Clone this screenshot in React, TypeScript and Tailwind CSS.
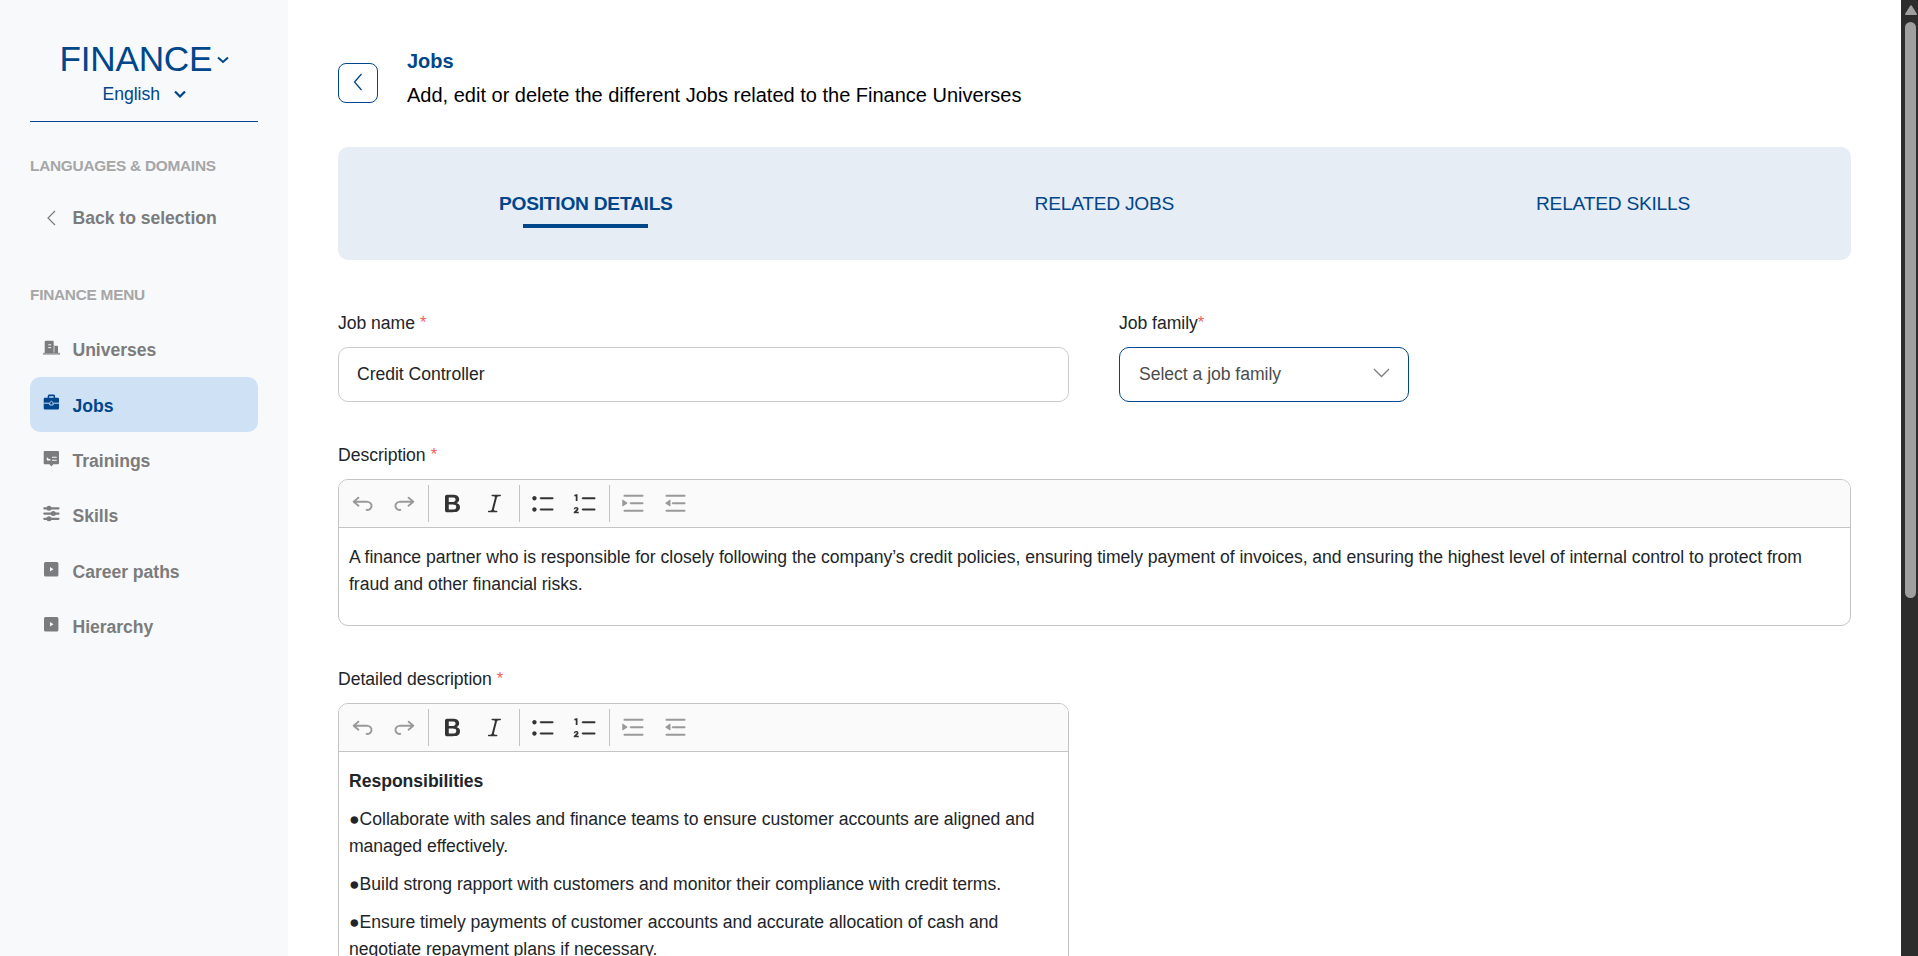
import React from "react";

const PATHS = {
  undo: "m5.042 9.367 2.189 1.837a.75.75 0 0 1-.965 1.149l-3.788-3.18a.747.747 0 0 1-.21-.284.75.75 0 0 1 .17-.945L6.23 4.762a.75.75 0 1 1 .964 1.15L4.863 7.866h8.917A.75.75 0 0 1 14 7.9a4 4 0 1 1-1.477 7.718l.344-1.489a2.5 2.5 0 1 0 1.094-4.73l.008-.032H5.042z",
  redo: "m14.958 9.367-2.189 1.837a.75.75 0 0 0 .965 1.149l3.788-3.18a.747.747 0 0 0 .21-.284.75.75 0 0 0-.17-.945L13.77 4.762a.75.75 0 1 0-.964 1.15l2.331 1.955H6.22A.75.75 0 0 0 6 7.9a4 4 0 1 0 1.477 7.718l-.344-1.489A2.5 2.5 0 1 1 6.039 9.4l-.008-.032h8.927z",
  bold: "M10.187 17H5.773c-.637 0-1.092-.138-1.364-.415-.273-.277-.409-.718-.409-1.323V4.738c0-.617.14-1.062.419-1.332.279-.27.73-.406 1.354-.406h4.68c.69 0 1.288.041 1.793.124.506.083.96.242 1.36.478.341.197.644.447.906.75a3.262 3.262 0 0 1 .808 2.162c0 1.401-.722 2.426-2.167 3.075C15.05 10.175 16 11.315 16 13.01a3.756 3.756 0 0 1-2.296 3.504 6.1 6.1 0 0 1-1.517.377c-.571.073-1.238.11-2 .11zm-.217-6.217H7v4.087h3.069c1.977 0 2.965-.69 2.965-2.072 0-.707-.256-1.22-.768-1.537-.512-.319-1.277-.478-2.296-.478zM7 5.13v3.619h2.606c.729 0 1.292-.067 1.69-.2a1.6 1.6 0 0 0 .91-.765c.165-.267.247-.566.247-.897 0-.707-.26-1.176-.778-1.409-.519-.232-1.31-.348-2.375-.348H7z",
  italic: "m9.586 14.633.021.004c-.036.335.095.655.393.962.082.083.173.15.274.201h1.474a.6.6 0 1 1 0 1.2H5.304a.6.6 0 0 1 0-1.2h1.15c.474-.07.809-.182 1.005-.334.157-.122.291-.32.404-.597l2.416-9.55a1.053 1.053 0 0 0-.281-.823 1.12 1.12 0 0 0-.442-.296H8.15a.6.6 0 0 1 0-1.2h6.443a.6.6 0 1 1 0 1.2h-1.195c-.376.056-.65.155-.823.296-.215.175-.423.439-.623.79l-2.366 9.347z",
  bullets: "M7 5.75c0 .414.336.75.75.75h9.5a.75.75 0 1 0 0-1.5h-9.5a.75.75 0 0 0-.75.75zm-6 0C1 4.784 1.777 4 2.75 4c.966 0 1.75.777 1.75 1.75 0 .966-.777 1.75-1.75 1.75C1.784 7.5 1 6.723 1 5.75zm6 9c0 .414.336.75.75.75h9.5a.75.75 0 1 0 0-1.5h-9.5a.75.75 0 0 0-.75.75zm-6 0c0-.966.777-1.75 1.75-1.75.966 0 1.75.777 1.75 1.75 0 .966-.777 1.75-1.75 1.75-.966 0-1.75-.777-1.75-1.75z",
  numbers: "M7 5.75c0 .414.336.75.75.75h9.5a.75.75 0 1 0 0-1.5h-9.5a.75.75 0 0 0-.75.75zM7 14.75c0 .414.336.75.75.75h9.5a.75.75 0 1 0 0-1.5h-9.5a.75.75 0 0 0-.75.75zM3.6 2.6V8H2.2V4.1H1V3.100l1.400-.5zM.600 17.700v-.9l2.100-2c.5-.5.3-1-.2-1s-.6.4-.6.8H.600c0-1.200.8-1.900 1.900-1.900 1.800 0 2.500 1.600 1.400 2.800l-1.100 1.100h1.800v1.100z",
  indent: "M2 3.75c0 .414.336.75.75.75h14.5a.75.75 0 1 0 0-1.5H2.75a.75.75 0 0 0-.75.75zm5 6c0 .414.336.75.75.75h9.5a.75.75 0 1 0 0-1.5h-9.5a.75.75 0 0 0-.75.75zM2.75 16.5h14.5a.75.75 0 1 0 0-1.5H2.75a.75.75 0 1 0 0 1.5zM1.632 6.95 5.02 9.358a.4.4 0 0 1-.013.661l-3.39 2.207A.4.4 0 0 1 1 11.892V7.275a.4.4 0 0 1 .632-.326z",
  outdent: "M2 3.75c0 .414.336.75.75.75h14.5a.75.75 0 1 0 0-1.5H2.75a.75.75 0 0 0-.75.75zm5 6c0 .414.336.75.75.75h9.5a.75.75 0 1 0 0-1.5h-9.5a.75.75 0 0 0-.75.75zM2.75 16.5h14.5a.75.75 0 1 0 0-1.5H2.75a.75.75 0 1 0 0 1.5zM5.368 6.95 1.98 9.358a.4.4 0 0 0 .013.661l3.39 2.207A.4.4 0 0 0 6 11.892V7.275a.4.4 0 0 0-.632-.326z",
};

function Tool({ name, muted }: { name: keyof typeof PATHS; muted?: boolean }) {
  return (
    <button className="flex w-[42.2px] items-center justify-center">
      <svg viewBox="0 0 20 20" className={muted ? "size-[25px] fill-[#999]" : "size-[25px] fill-[#333]"}>
        <path d={PATHS[name]} />
      </svg>
    </button>
  );
}

const Sep = () => <span className="mx-[2.6px] h-[37px] w-px bg-[#c4c4c4]" />;

function Toolbar() {
  return (
    <div className="flex h-[48px] items-center rounded-t-[9px] border-b border-[#c4c4c4] bg-[#fafafa] pl-[2px]">
      <Tool name="undo" muted />
      <Tool name="redo" muted />
      <Sep />
      <Tool name="bold" />
      <Tool name="italic" />
      <Sep />
      <Tool name="bullets" />
      <Tool name="numbers" />
      <Sep />
      <Tool name="indent" muted />
      <Tool name="outdent" muted />
    </div>
  );
}

const icons = {
  building: (
    <>
      <path d="M4 1.700h6.700a1 1 0 0 1 1 1v4h3.300a1 1 0 0 1 1 1V14H2.700V3a1.300 1.300 0 0 1 1.300-1.300z" />
      <path d="M1 13.800h17v1.900H1z" opacity=".75" />
      <path d="M6.300 5.800h2.800M6.300 8.600h2.800" stroke="#f7f9fb" strokeWidth="1" />
      <path d="M12 7v6.500" stroke="#f7f9fb" strokeWidth=".7" />
    </>
  ),
  briefcase: (
    <>
      <path d="M5.700 3.700V2A1.500 1.500 0 0 1 7.200.500h4.400A1.500 1.500 0 0 1 13.100 2v1.700h2.700A1.300 1.300 0 0 1 17 5v9.200a1.300 1.300 0 0 1-1.300 1.300H3A1.300 1.300 0 0 1 1.700 14.200V5A1.300 1.300 0 0 1 3 3.700zM7.200 3.700h4.400V2.200H7.200z" />
      <path d="M1.500 9.200h5.800M11.500 9.200h6" stroke="#cfe1f5" strokeWidth="1" />
      <path d="M7.700 11V8.700l1.700-1.500 1.700 1.500V11z" fill="none" stroke="#cfe1f5" strokeWidth=".9" />
    </>
  ),
  board: (
    <>
      <path d="M2.700 2h13.300a1 1 0 0 1 1 1v11.300a1 1 0 0 1-1 1h-4.700L9.400 17.500 7.500 15.300H2.700a1 1 0 0 1-1-1V3a1 1 0 0 1 1-1z" />
      <path d="M4.800 8v3.500h3.800v-1L6.500 9.800z" fill="#f7f9fb" />
      <path d="M10 8.300h4.700M10 11.300h4.700" stroke="#f7f9fb" strokeWidth="1.100" />
    </>
  ),
  sliders: (
    <>
      <path d="M2.300 3.300h14.200M2.300 8.600h14.200M2.300 13.800h14.200" stroke="#7c7c7c" strokeWidth="2.200" strokeLinecap="round" />
      <circle cx="7" cy="3.300" r="2.500" />
      <circle cx="11.300" cy="8.600" r="2.500" />
      <circle cx="7" cy="13.800" r="2.500" />
    </>
  ),
  play: (
    <>
      <rect x="2" y="2" width="14.400" height="14.400" rx="1.500" />
      <path d="M8 7l3.500 2.200L8 11.400z" fill="#f7f9fb" />
    </>
  ),
};

const items: [string, keyof typeof icons, boolean?][] = [
  ["Universes", "building"],
  ["Jobs", "briefcase", true],
  ["Trainings", "board"],
  ["Skills", "sliders"],
  ["Career paths", "play"],
  ["Hierarchy", "play"],
];

function Sidebar() {
  return (
    <aside className="flex h-full w-[288px] shrink-0 flex-col bg-[#f7f9fb] px-[30px]">
      <div className="mt-[39px] flex h-[42px] items-center pl-[29.5px] text-[#00468b]">
        <span className="mb-[1px] text-[35.2px] tracking-[-0.25px]">FINANCE</span>
        <svg viewBox="0 0 12 8" className="ml-[5px] h-[8px] w-[12px] fill-none stroke-[#00468b] stroke-2">
          <path d="M1 1.500l5 4.500 5-4.500" />
        </svg>
      </div>
      <div className="flex h-[26px] items-center pl-[72.5px] text-[#00468b]">
        <span className="text-[17.6px]">English</span>
        <svg viewBox="0 0 12 8" className="ml-[14px] h-[8px] w-[12px] fill-none stroke-[#00468b] stroke-[2.2]">
          <path d="M1 1.500l5 5 5-5" />
        </svg>
      </div>
      <div className="mt-[14px] h-px bg-[#00468b]" />
      <div className="mt-[34px] h-[20px] text-[15.4px] leading-[20px] font-bold tracking-[-0.26px] text-[#a6a6a6]">LANGUAGES &amp; DOMAINS</div>
      <div className="mt-[15px] flex h-[55px] items-center text-[17.6px] font-bold text-[#7c7c7c]">
        <svg viewBox="0 0 18 18" className="mb-[2px] ml-[12px] size-[18px] fill-none stroke-[#7c7c7c] stroke-[1.2]">
          <path d="M13 2L6 9l7 7" />
        </svg>
        <span className="ml-[12.5px] tracking-[-0.03px]">Back to selection</span>
      </div>
      <div className="mt-[39px] h-[20px] text-[15.4px] leading-[20px] font-bold tracking-[-0.26px] text-[#a6a6a6]">FINANCE MENU</div>
      <nav className="mt-[17px] flex flex-col gap-[0.4px]">
        {items.map(([label, icon, active]) => (
          <a
            key={label}
            className={
              active
                ? "flex h-[55px] items-center rounded-[10px] bg-[#cfe1f5] text-[17.6px] font-bold text-[#00468b]"
                : "flex h-[55px] items-center text-[17.6px] font-bold text-[#7c7c7c]"
            }
          >
            <svg viewBox="0 0 18 18" className="mb-[4px] ml-[12px] size-[18px] fill-current">
              {icons[icon]}
            </svg>
            <span className="mt-[2px] ml-[12.5px] tracking-[-0.04px]">{label}</span>
          </a>
        ))}
      </nav>
    </aside>
  );
}

function Label({ text, gap }: { text: string; gap?: boolean }) {
  return (
    <div className="flex h-[26px] items-center">
      <span>{text}</span>
      <span className={gap ? "mb-[2px] ml-[5px] text-[16.5px] text-[#f0605a]" : "mb-[2px] text-[16.5px] text-[#f0605a]"}>*</span>
    </div>
  );
}

export default function App() {
  return (
    <div className="flex h-[956px] w-full overflow-hidden bg-white font-['Liberation_Sans',Arial,sans-serif] text-[17.6px] tracking-[-0.035px] text-[#212529]">
      <Sidebar />
      <main className="flex h-full flex-1 flex-col overflow-hidden pl-[50px]">
        <header className="mt-[46px] flex h-[64px] shrink-0 items-center">
          <button className="mt-[10px] flex size-[40px] items-center justify-center rounded-[8px] border border-[#00468b]">
            <svg viewBox="0 0 18 18" className="mb-[2px] size-[18px] fill-none stroke-[#00468b] stroke-[1.3]">
              <path d="M12.500 1L5.500 9l7 8" />
            </svg>
          </button>
          <div className="ml-[29px] tracking-normal">
            <h1 className="text-[20px] leading-[30px] font-bold text-[#00468b]">Jobs</h1>
            <p className="-mb-[2px] pt-[2px] text-[20px] leading-[34px] text-black">Add, edit or delete the different Jobs related to the Finance Universes</p>
          </div>
        </header>
        <div className="mt-[37px] flex h-[113px] w-[1513px] shrink-0 items-start justify-between rounded-[10px] bg-[#e6edf5] px-[161px] pt-[44px] text-[19.2px] leading-[26px] tracking-[-0.25px] text-[#00468b]">
          <div className="flex flex-col items-center">
            <span className="font-bold">POSITION DETAILS</span>
            <span className="mt-[7px] h-[4px] w-[125px] bg-[#00468b]" />
          </div>
          <span>RELATED JOBS</span>
          <span>RELATED SKILLS</span>
        </div>
        <div className="mt-[50px] flex shrink-0 gap-[50px]">
          <div className="w-[731px]">
            <Label text="Job name" gap />
            <div className="mt-[11px] flex h-[55px] items-center rounded-[10px] border border-[#ccc] pl-[18px]">Credit Controller</div>
          </div>
          <div className="w-[290px]">
            <Label text="Job family" />
            <div className="mt-[11px] flex h-[55px] items-center justify-between rounded-[10px] border border-[#00468b] pr-[18px] pl-[19px] text-[#4d4d4d]">
              <span>Select a job family</span>
              <svg viewBox="0 0 17 10" className="mb-[3px] h-[10px] w-[17px] fill-none stroke-[#7c7c7c] stroke-[1.3]">
                <path d="M1 1l7.500 7.500L16 1" />
              </svg>
            </div>
          </div>
        </div>
        <div className="mt-[40px] shrink-0">
          <Label text="Description" gap />
        </div>
        <div className="mt-[11px] h-[147px] w-[1513px] shrink-0 rounded-[10px] border border-[#c4c4c4]">
          <Toolbar />
          <p className="pt-[16px] pl-[10px] leading-[27.2px] whitespace-nowrap">
            A finance partner who is responsible for closely following the company’s credit policies, ensuring timely payment of invoices, and ensuring the highest level of internal control to protect from
            <br />
            fraud and other financial risks.
          </p>
        </div>
        <div className="mt-[40px] shrink-0">
          <Label text="Detailed description" gap />
        </div>
        <div className="mt-[11px] h-[400px] w-[731px] shrink-0 rounded-t-[10px] border border-[#c4c4c4]">
          <Toolbar />
          <div className="flex flex-col gap-[10.6px] pt-[16.2px] pl-[10px] leading-[27.3px] whitespace-nowrap">
            <p className="font-bold">Responsibilities</p>
            <p>
              ●Collaborate with sales and finance teams to ensure customer accounts are aligned and
              <br />
              managed effectively.
            </p>
            <p>●Build strong rapport with customers and monitor their compliance with credit terms.</p>
            <p>
              ●Ensure timely payments of customer accounts and accurate allocation of cash and
              <br />
              negotiate repayment plans if necessary.
            </p>
          </div>
        </div>
      </main>
      <div className="flex h-full w-[17px] flex-col items-center bg-[#2c2c2c]">
        <svg viewBox="0 0 12 10" className="mt-[5px] ml-[2px] h-[10px] w-[12px] fill-[#9f9f9f]">
          <path d="M5 1q1-1.500 2 0l5 8q0 1-1 1H1q-1 0-1-1z" />
        </svg>
        <div className="mt-[7px] ml-[2px] h-[576px] w-[11px] rounded-full bg-[#9f9f9f]" />
      </div>
    </div>
  );
}
